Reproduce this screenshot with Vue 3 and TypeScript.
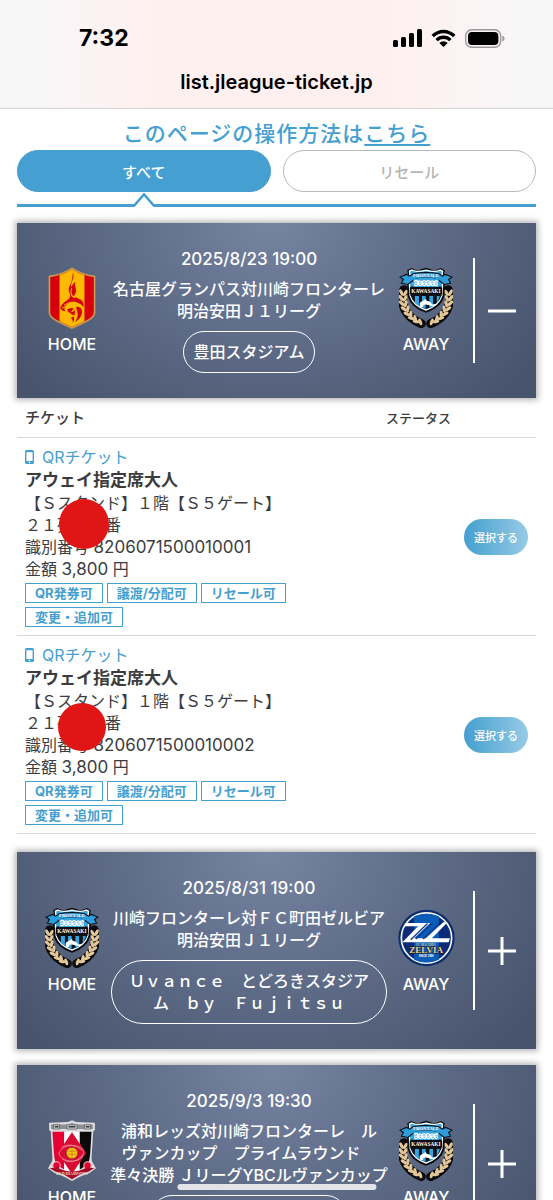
<script setup lang="ts">
import { ref } from 'vue'

type Club = 'nagoya' | 'kawasaki' | 'machida' | 'urawa'

interface Ticket {
  id: string
  seat: string
  area: string
  row: string
  price: string
  tags: string[]
  mask: 'large' | 'small'
}

interface Match {
  id: number
  date: string
  title: string[]
  stadium: string
  home: Club
  away: Club
  open: boolean
  tickets: Ticket[]
}

const tags = ['QR発券可', '譲渡/分配可', 'リセール可', '変更・追加可']
const common = {
  seat: 'アウェイ指定席大人',
  area: '【Ｓスタンド】１階【Ｓ５ゲート】',
  row: '２１列　　番',
  price: '3,800',
  tags,
}

const matches = ref<Match[]>([
  {
    id: 1,
    date: '2025/8/23 19:00',
    title: ['名古屋グランパス対川崎フロンターレ', '明治安田Ｊ１リーグ'],
    stadium: '豊田スタジアム',
    home: 'nagoya',
    away: 'kawasaki',
    open: true,
    tickets: [
      { id: '8206071500010001', mask: 'large', ...common },
      { id: '8206071500010002', mask: 'small', ...common },
    ],
  },
  {
    id: 2,
    date: '2025/8/31 19:00',
    title: ['川崎フロンターレ対ＦＣ町田ゼルビア', '明治安田Ｊ１リーグ'],
    stadium: 'Ｕｖａｎｃｅ　とどろきスタジアム　ｂｙ　Ｆｕｊｉｔｓｕ',
    home: 'kawasaki',
    away: 'machida',
    open: false,
    tickets: [],
  },
  {
    id: 3,
    date: '2025/9/3 19:30',
    title: ['浦和レッズ対川崎フロンターレ　ル', 'ヴァンカップ　プライムラウンド　', '準々決勝 ＪリーグYBCルヴァンカップ'],
    stadium: '埼玉スタジアム２００２',
    home: 'urawa',
    away: 'kawasaki',
    open: false,
    tickets: [],
  },
])

const activeTab = ref<'all' | 'resale'>('all')

const sides = (m: Match) => [
  { club: m.home, label: 'HOME', area: 'home' },
  { club: m.away, label: 'AWAY', area: 'away' },
]

/* Laurel leaves on the left half of the Kawasaki wreath; the right half mirrors them. */
const stem = [
  [12, 76], [11, 92], [13, 108], [19, 124], [28, 139], [41, 152], [56, 162],
]
const leaves = stem.flatMap(([x, y], i) => {
  const turn = -i * 9
  return [
    { x: x - 5, y, r: -26 + turn },
    { x: x + 7, y: y + 1, r: 34 + turn },
  ]
})
</script>

<template>
  <div class="screen">
    <header class="browser">
      <div class="status">
        <span class="time">7:32</span>
        <span class="indicators">
          <svg width="29" height="18" viewBox="0 0 29 18" aria-hidden="true">
            <rect x="0" y="11" width="5" height="7" rx="1.5" />
            <rect x="8" y="8" width="5" height="10" rx="1.5" />
            <rect x="16" y="4" width="5" height="14" rx="1.5" />
            <rect x="24" y="0" width="5" height="18" rx="1.5" />
          </svg>
          <svg width="25" height="18" viewBox="0 0 25 18" aria-hidden="true">
            <path d="M0.5 5.8A17 17 0 0 1 24.5 5.8L22.1 8.3A13.6 13.6 0 0 0 2.9 8.3Z" />
            <path d="M4.4 9.9A11.4 11.4 0 0 1 20.6 9.9L18.2 12.3A8 8 0 0 0 6.8 12.3Z" />
            <path d="M8.3 13.9A6 6 0 0 1 16.7 13.9L12.5 18Z" />
          </svg>
          <svg width="40" height="19" viewBox="0 0 40 19" aria-hidden="true">
            <rect x="0.7" y="0.7" width="35" height="17.6" rx="6" fill="none" stroke="#9c9799" stroke-width="1.4" />
            <rect x="3" y="3" width="30.4" height="13" rx="4" />
            <path d="M37.4 6.5Q39.6 7.3 39.6 9.5T37.4 12.5Z" fill="#9c9799" />
          </svg>
        </span>
      </div>
      <div class="address">list.jleague-ticket.jp</div>
    </header>

    <main class="page">
      <p class="guide">このページの操作方法は<a href="#guide">こちら</a></p>

      <nav class="tabs">
        <div class="tab-cell">
          <button type="button" class="tab" :class="{ active: activeTab === 'all' }" @click="activeTab = 'all'">すべて</button>
          <svg v-if="activeTab === 'all'" class="notch" width="26" height="15" viewBox="0 0 26 15" aria-hidden="true">
            <path d="M3 15L13 3.5L23 15Z" fill="#fff" />
            <path d="M1 13.5H3.2L13 2.5L22.8 13.5H25" fill="none" stroke="#459fd0" stroke-width="2.6" />
          </svg>
        </div>
        <div class="tab-cell">
          <button type="button" class="tab" :class="{ active: activeTab === 'resale' }" @click="activeTab = 'resale'">リセール</button>
          <svg v-if="activeTab === 'resale'" class="notch" width="26" height="15" viewBox="0 0 26 15" aria-hidden="true">
            <path d="M3 15L13 3.5L23 15Z" fill="#fff" />
            <path d="M1 13.5H3.2L13 2.5L22.8 13.5H25" fill="none" stroke="#459fd0" stroke-width="2.6" />
          </svg>
        </div>
      </nav>

      <section v-for="m in matches" :key="m.id" class="match">
        <div class="card">
          <div v-for="s in sides(m)" :key="s.label" class="team" :class="s.area">
            <svg v-if="s.club === 'nagoya'" class="crest" viewBox="0 0 160 184" aria-hidden="true">
              <path d="M80 4Q108 22 147 28V136Q147 150 119 163L80 181L41 163Q13 150 13 136V28Q52 22 80 4Z" fill="#d7000f" stroke="#c59a52" stroke-width="5" />
              <path d="M43 24Q64 18 80 7Q96 18 117 24V161L80 178L43 161Z" fill="#fbb900" />
              <path d="M83 15Q87 30 81 41Q75 50 78 60Q83 49 90 44Q87 54 91 63Q95 77 82 90Q95 90 106 97Q117 105 114 119Q107 108 92 106Q72 101 60 117Q54 128 62 131Q48 132 45 122Q52 106 67 98Q79 89 73 79Q66 67 75 53Q83 35 83 15Z" fill="#d7000f" />
              <path d="M79 62Q72 81 86 91M57 114Q80 94 107 114M50 122Q72 110 92 115" fill="none" stroke="#fbb900" stroke-width="3" />
              <path d="M66 126Q76 118 86 124Q76 129 78 139L68 133ZM92 118Q110 118 110 134Q108 151 89 164Q100 145 96 135ZM74 137L90 128L87 144L80 141ZM76 151L85 147Q89 158 81 166Q85 157 76 151Z" fill="#d7000f" />
            </svg>

            <svg v-else-if="s.club === 'kawasaki'" class="crest" viewBox="0 0 160 184" aria-hidden="true">
              <g v-for="side in [1, -1]" :key="side" :transform="side === 1 ? '' : 'translate(160 0) scale(-1 1)'">
                <path d="M14 68Q4 98 18 128Q32 154 66 168" fill="none" stroke="#0b0b0d" stroke-width="27" stroke-linecap="round" stroke-linejoin="round" />
                <ellipse v-for="(l, i) in leaves" :key="i" rx="4.8" ry="10.5" fill="#e3c799" :transform="`translate(${l.x} ${l.y}) rotate(${l.r})`" />
              </g>
              <path d="M24 10L37 3Q48 11 61 8L80 2L99 8Q112 11 123 3L136 10Q131 22 137 38L134 88Q124 121 80 136Q36 121 26 88L23 38Q29 22 24 10Z" fill="#0b0b0d" />
              <path d="M31 12L38 9Q52 17 80 9Q108 17 122 9L129 12Q126 25 130 40L127 85Q118 115 80 128Q42 115 33 85L30 40Q34 25 31 12Z" fill="#35a4df" stroke="#fff" stroke-width="4" />
              <path d="M34 58H126V84Q117 112 80 125Q43 112 34 84Z" fill="#0c1118" />
              <path d="M47 86H59V116L47 107ZM68 86H79V124L68 120ZM90 86H101V118L90 122ZM112 86H121L116 102L112 107Z" fill="#35a4df" />
              <path d="M3 30L22 22L31 27L42 20Q80 12 118 20L129 27L138 22L157 30L147 37L153 48L134 52L116 38Q80 26 44 38L26 52L7 48L13 37Z" fill="#2c9cda" stroke="#0b0b0d" stroke-width="3" />
              <path d="M42 36Q80 26 118 36V59H42Z" fill="#35a4df" />
              <path d="M45 43Q52 36 57 45Q62 37 68 45Q74 36 80 44Q87 36 92 45Q99 37 104 45Q111 37 115 44M45 52Q51 59 57 51Q63 59 69 51Q75 59 81 51Q88 59 94 51Q101 59 105 51Q111 59 115 51M45 48H115" fill="none" stroke="#fff" stroke-width="4" />
              <path d="M32 61H128V81H32Z" fill="#0b0b0d" />
              <text x="80" y="30" text-anchor="middle" font-family="Liberation Serif, serif" font-weight="700" font-size="14" fill="#fff">FRONTALE</text>
              <text x="80" y="77" text-anchor="middle" font-family="Liberation Serif, serif" font-weight="700" font-size="16" fill="#fff">KAWASAKI</text>
              <path d="M61 114Q59 103 72 100L79 94L82 100Q94 101 99 112Q104 108 108 111Q103 118 95 116Q83 109 73 112Q72 119 65 121Z" fill="#fff" />
            </svg>

            <svg v-else-if="s.club === 'machida'" class="crest round" viewBox="0 0 170 170" aria-hidden="true">
              <circle cx="85" cy="85" r="84" fill="#0a2d6e" />
              <circle cx="85" cy="85" r="75" fill="#0b2a78" stroke="#f7f7f5" stroke-width="5" />
              <path d="M48 20Q85 5 122 20V150Q85 166 48 150Z" fill="#0b5cb8" />
              <path d="M24 40H96L48 86H83L135 38H148L101 86H155L151 98H13L60 50H18Z" fill="#fff" />
              <path d="M103 40L53 88M124 40L75 88M88 42L38 90" stroke="#0c3b91" stroke-width="4" />
              <text x="84" y="110" text-anchor="middle" font-family="Liberation Serif, serif" font-size="9" font-weight="700" fill="#d8c69a">FC MACHIDA</text>
              <text x="84" y="131" text-anchor="middle" font-family="Liberation Serif, serif" font-size="27" font-weight="700" fill="#ecd59c" stroke="#171717" stroke-width="3" paint-order="stroke">ZELVIA</text>
              <text x="84" y="143" text-anchor="middle" font-family="Liberation Sans, sans-serif" font-size="8" font-weight="700" fill="#fff">SINCE 1989</text>
            </svg>

            <svg v-else class="crest" viewBox="0 0 160 184" aria-hidden="true">
              <path d="M12 8L68 6L80 1L92 6L148 8V30L143 34L139 98Q136 123 143 129L151 143L132 157Q108 164 80 181Q52 164 28 157L9 143L17 129Q24 123 21 98L17 34L12 30Z" fill="#dcdcde" />
              <path d="M18 13H70L80 8L90 13H142V27H18Z" fill="#8d9094" />
              <path d="M25 14H43V27H25ZM65 14H95V27H65ZM117 14H135V27H117Z" fill="#c8cacc" stroke="#4d5155" stroke-width="2" />
              <path d="M29 20H40M70 20H90M121 20H132" stroke="#36393c" stroke-width="4" />
              <path d="M22 35H57V147L32 132Q27 112 26 94Z" fill="#e60033" />
              <path d="M57 35H103V151L80 164L57 151Z" fill="#fff" />
              <path d="M103 35H138L134 97Q132 122 126 133L103 147Z" fill="#090909" />
              <path d="M80 36L122 98L80 160L38 98Z" fill="#d90b35" />
              <path d="M41 98Q56 69 94 77Q122 83 112 106Q102 126 69 121Q45 117 41 98ZM48 81Q79 64 111 90M51 116Q80 137 112 105" fill="none" stroke="#f2a4ae" stroke-width="2" />
              <circle cx="80" cy="98" r="17" fill="#f4bf16" stroke="#85411d" stroke-width="2" />
              <path d="M67 93H93M67 102H93M80 83V113" stroke="#ca7a18" stroke-width="2" />
              <circle cx="34" cy="135" r="11" fill="#e4002f" stroke="#efc2c8" stroke-width="3" />
              <circle cx="126" cy="135" r="11" fill="#e4002f" stroke="#efc2c8" stroke-width="3" />
              <path d="M14 143L34 140Q80 165 126 140L146 143L130 153Q105 160 80 176Q55 160 30 153Z" fill="#a80c28" />
              <text x="80" y="162" text-anchor="middle" font-family="Liberation Serif, serif" font-size="12" font-weight="700" fill="#f0d8ca">RED DIAMONDS</text>
            </svg>
            <span>{{ s.label }}</span>
          </div>

          <div class="detail">
            <time class="date">{{ m.date }}</time>
            <h2 class="title"><span v-for="line in m.title" :key="line">{{ line }}</span></h2>
            <span class="stadium">{{ m.stadium }}</span>
          </div>

          <button type="button" class="toggle" :aria-expanded="m.open" aria-label="チケットの表示を切り替える" @click="m.open = !m.open">
            <svg width="28" height="28" viewBox="0 0 28 28" aria-hidden="true">
              <path d="M0 14H28" stroke="#fff" stroke-width="3" />
              <path v-if="!m.open" d="M14 0V28" stroke="#fff" stroke-width="3" />
            </svg>
          </button>
        </div>

        <table v-if="m.open && m.tickets.length" class="tickets">
          <thead>
            <tr>
              <th class="col-ticket" scope="col">チケット</th>
              <th class="col-status" scope="col">ステータス</th>
            </tr>
          </thead>
          <tbody>
            <tr v-for="t in m.tickets" :key="t.id">
              <td class="info">
                <p class="kind">
                  <svg width="9" height="14" viewBox="0 0 9 14" aria-hidden="true">
                    <rect width="9" height="14" rx="1.6" fill="#459fd0" />
                    <rect x="1.4" y="2.2" width="6.2" height="8.8" fill="#fff" />
                    <circle cx="4.5" cy="12.4" r="0.8" fill="#fff" />
                  </svg>
                  QRチケット
                </p>
                <p class="seat">{{ t.seat }}</p>
                <div class="lines">
                  <p>{{ t.area }}</p>
                  <p>{{ t.row }}</p>
                  <p>識別番号 <span class="number">{{ t.id }}</span></p>
                  <p>金額 <span class="number">{{ t.price }}</span> 円</p>
                  <span class="mask" :class="t.mask"></span>
                </div>
                <ul class="tags">
                  <li v-for="tag in t.tags" :key="tag">{{ tag }}</li>
                </ul>
              </td>
              <td class="action"><button type="button" class="select">選択する</button></td>
            </tr>
          </tbody>
        </table>
      </section>
    </main>
    <div class="home-bar"></div>
  </div>
</template>

<style>
body {
  margin: 0;
  background: #fff;
}
</style>

<style scoped>
.screen {
  position: relative;
  display: flex;
  flex-direction: column;
  height: 100vh;
  overflow: hidden;
  background: #fff;
  color: #3c3c3e;
  font-family: Inter, "Noto Sans CJK JP", sans-serif;
  font-size: 16px;
  line-height: 22px;
}

p,
h2,
ul {
  margin: 0;
  padding: 0;
}

button {
  font-family: inherit;
  cursor: pointer;
}

.browser {
  flex: none;
  padding-top: 24px;
  height: 84px;
  border-bottom: 1px solid #d5d3d4;
  background: linear-gradient(90deg, #f7f7f8 4%, #fff0f0 28%, #fff0f0 70%, #f7f7f8 96%);
  color: #000;
}

.status {
  display: flex;
  justify-content: space-between;
  align-items: center;
  height: 28px;
  padding: 0 48px 0 79px;
}

.time {
  font-size: 23px;
  font-weight: 700;
}

.indicators {
  display: flex;
  align-items: center;
  gap: 9px;
}

.address {
  margin-top: 18px;
  font-size: 20px;
  font-weight: 600;
  line-height: 24px;
  text-align: center;
}

.page {
  flex: 1;
  min-height: 0;
  padding: 8px 17px 0;
  overflow-y: auto;
  scrollbar-width: none;
}

.guide {
  color: #459fd0;
  font-size: 21px;
  font-weight: 500;
  letter-spacing: 1px;
  line-height: 33px;
  text-align: center;
}

.guide a {
  color: inherit;
  text-underline-offset: 3px;
}

.tabs {
  display: grid;
  grid-template-columns: 1fr 1fr;
  gap: 12px;
  padding-bottom: 12px;
  border-bottom: 3px solid #459fd0;
}

.tab-cell {
  position: relative;
}

.tab {
  display: block;
  width: 100%;
  height: 42px;
  border: 1px solid #b8b8b8;
  border-radius: 21px;
  background: #fff;
  color: #b5b5b5;
  font-size: 15px;
  font-weight: 500;
}

.tab.active {
  border-color: #459fd0;
  background: #459fd0;
  color: #fff;
}

.notch {
  position: absolute;
  top: 100%;
  left: 50%;
  margin-left: -13px;
}

.match {
  margin-top: 16px;
}

.card {
  display: grid;
  grid-template-columns: 78px minmax(0, 1fr) 78px 64px;
  grid-template-areas: "home detail away toggle";
  padding: 0 7px 0 16px;
  background: radial-gradient(ellipse 62% 140% at 49% 0, #7684a2 0%, #5f6c88 48%, #48546c 100%);
  box-shadow: 0 0 6px 2px rgba(40, 40, 50, 0.35);
  color: #fff;
  font-weight: 500;
}

.team {
  display: flex;
  flex-direction: column;
  align-items: center;
  justify-content: center;
  gap: 4px;
}

.home {
  grid-area: home;
}

.away {
  grid-area: away;
}

.crest {
  width: 54px;
  height: 62px;
}

.crest.round {
  width: 57px;
}

.detail {
  grid-area: detail;
  display: flex;
  flex-direction: column;
  align-items: center;
  padding: 25px 0;
}

.date {
  font-size: 17px;
}

.title {
  margin: 8px 0 9px;
  font-size: inherit;
  font-weight: inherit;
  text-align: center;
}

.title span {
  display: block;
  white-space: pre;
}

.stadium {
  padding: 9px 10px;
  border: 1px solid #fff;
  border-radius: 32px;
  text-align: center;
}

.toggle {
  grid-area: toggle;
  align-self: center;
  display: flex;
  align-items: center;
  justify-content: center;
  height: 60%;
  margin-left: 8px;
  padding: 0;
  border: 0;
  border-left: 2px solid #fff;
  background: none;
}

.tickets {
  width: 100%;
  margin-bottom: 18px;
  border-collapse: collapse;
  table-layout: fixed;
}

th {
  height: 39px;
  padding: 0;
  border-bottom: 1px solid #d8d8d8;
  font-size: 15px;
  font-weight: 500;
  text-align: left;
}

th.col-ticket {
  padding-left: 8px;
}

th.col-status {
  width: 150px;
  font-size: 13px;
}

td {
  padding: 8px;
  border-bottom: 1px solid #d8d8d8;
}

td.info {
  padding-right: 0;
}

.kind {
  display: flex;
  align-items: center;
  gap: 8px;
  color: #459fd0;
}

.seat {
  font-size: 17px;
  font-weight: 700;
  line-height: 24px;
}

.lines {
  position: relative;
}

.number {
  font-size: 17px;
}

.mask {
  position: absolute;
  border-radius: 50%;
  background: #e01616;
}

.mask.large {
  top: 7px;
  left: 34px;
  width: 50px;
  height: 50px;
}

.mask.small {
  top: 13px;
  left: 33px;
  width: 48px;
  height: 48px;
}

.tags {
  display: flex;
  flex-wrap: wrap;
  gap: 4px;
  max-width: 300px;
  margin-top: 3px;
  list-style: none;
}

.tags li {
  padding: 0 9px;
  border: 1px solid #459fd0;
  color: #459fd0;
  font-size: 13px;
  font-weight: 700;
  line-height: 18px;
}

.action {
  text-align: right;
}

.select {
  width: 64px;
  height: 36px;
  padding: 0;
  border: 0;
  border-radius: 18px;
  background: linear-gradient(90deg, #459fd0, #96cbe5);
  color: #fff;
  font-size: 11px;
  font-weight: 500;
  vertical-align: middle;
}

.home-bar {
  position: absolute;
  bottom: 10px;
  left: 50%;
  width: 36%;
  height: 6px;
  border-radius: 3px;
  background: #e3e4e8;
  transform: translateX(-50%);
}
</style>
